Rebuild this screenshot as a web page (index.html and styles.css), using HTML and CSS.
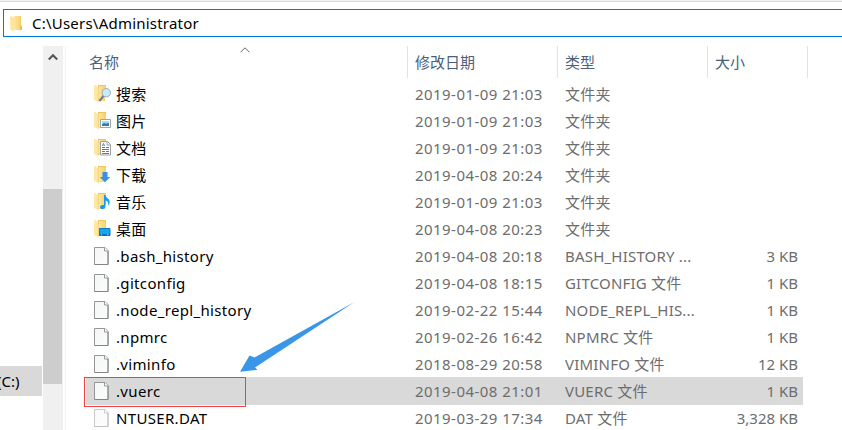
FILE: index.html
```html
<!DOCTYPE html>
<html lang="zh-CN">
<head>
<meta charset="utf-8">
<title>C:\Users\Administrator</title>
<link rel="stylesheet" href="styles.css">
</head>
<body>
<svg class="defs" width="0" height="0">
  <defs>
    <linearGradient id="gold" x1="0" x2="1"><stop offset="0" stop-color="#ffe69e"/><stop offset="1" stop-color="#f4ce68"/></linearGradient>
    <linearGradient id="paper" x1="0" y1="0" x2="1" y2="1"><stop offset="0" stop-color="#f3f5f6"/><stop offset="1" stop-color="#fcfdfd"/></linearGradient>
    <symbol id="folder" viewBox="0 0 18 20">
      <path d="M4 1h8v11l-1 1v4H4z" fill="#efc55d"/>
      <path d="M5 2h7v10l-1 1v4H5z" fill="url(#gold)"/>
      <path d="M0 1.5 1.5 1 4.5 3.5V18L0 16z" fill="#ffe8a3"/>
      <path d="M4 3.2V18" stroke="#f6d98a" stroke-width=".8"/>
    </symbol>
    <symbol id="file" viewBox="0 0 18 20">
      <path d="M.5 1.5h10.6l3 3v14H.5z" fill="url(#paper)" stroke="#979797"/>
      <path d="M10.500 1.5v3.500h3.500" fill="#fff" stroke="#979797"/>
      <path d="M14 5v13.500H.5" fill="none" stroke="#858585"/>
    </symbol>
  </defs>
</svg>
<div class="explorer">
  <div class="topline"></div>
  <div class="address">
    <svg class="address-icon" width="13" height="17" viewBox="0 0 13 17"><path d="M4 1h7v9l1 1v4H4z" fill="url(#gold)"/><path d="M10.5 1v9.5l1.5.5v4h-2" fill="#e8bd54"/><path d="M0 1.5 1.2 1 4 3v13.5L.5 15z" fill="#ffe49a"/></svg>
    <span>C:\Users\Administrator</span>
  </div>
  <div class="content">
    <aside class="tree"><div class="drive"><span>(C:)</span></div></aside>
    <div class="scrollbar">
      <svg class="scroll-up" width="10" height="8" viewBox="0 0 10 8"><path d="M.8 6.5 5 2.3l4.2 4.2" fill="none" stroke="#555" stroke-width="2.1"/></svg>
      <div class="thumb"></div>
    </div>
    <main class="list">
      <div class="head">
        <div class="h-name">名称<svg class="sort" width="10" height="6" viewBox="0 0 10 6"><path d="M.5 5.3 5 .8l4.5 4.5" fill="none" stroke="#666"/></svg></div>
        <div>修改日期</div><div>类型</div><div>大小</div>
      </div>
      <div class="row"><svg class="icon"><use href="#folder"/><path d="m5.3 17 5-6" stroke="#6d7f8c" stroke-width="2"/><circle cx="12.3" cy="8.7" r="4.2" fill="#c9eafb" stroke="#9aabb6"/></svg><span class="name">搜索</span><span class="date">2019-01-09 21:03</span><span class="type">文件夹</span><span class="size"></span></div>
      <div class="row"><svg class="icon"><use href="#folder"/><path d="M6.5 8.5h10v8h-10z" fill="#fff" stroke="#a0a5a8"/><path d="M8 10h7v2.5H8z" fill="#a7d9f7"/><path d="m8 13 2-1 2 .5 3-.5v3H8z" fill="#3a7b9e"/></svg><span class="name">图片</span><span class="date">2019-01-09 21:03</span><span class="type">文件夹</span><span class="size"></span></div>
      <div class="row"><svg class="icon"><use href="#folder"/><path d="M6.5 3.5h7l3 3v10.5h-10z" fill="#fff" stroke="#9a9ea1"/><path d="M13 3.5V7h3.5" fill="none" stroke="#9a9ea1"/><path d="m8.5 8 1-2.5 1 2.500M8 9.500h3M12 9.500h3M8 11.500h7M8 13.500h3M12 13.500h3M8 15.500h7" fill="none" stroke="#2989d2"/></svg><span class="name">文档</span><span class="date">2019-01-09 21:03</span><span class="type">文件夹</span><span class="size"></span></div>
      <div class="row"><svg class="icon"><use href="#folder"/><path d="M8.500 7h5v5h2.700L11 17.200 5.800 12h2.700z" fill="#3493e8"/></svg><span class="name">下载</span><span class="date">2019-04-08 20:24</span><span class="type">文件夹</span><span class="size"></span></div>
      <div class="row"><svg class="icon"><use href="#folder"/><path d="M10 3h1.500c.2 3 4.700 3.500 4.200 7.500-.2 1.500-1 2.500-1.700 3 1-3-.5-4.500-2.500-5v6c0 3-5.500 3.500-5.500.7 0-2 2.500-2.700 4-2z" fill="#139cf2"/></svg><span class="name">音乐</span><span class="date">2019-01-09 21:03</span><span class="type">文件夹</span><span class="size"></span></div>
      <div class="row"><svg class="icon"><use href="#folder"/><path d="M5.500 9.500h10.500v7H5.500z" fill="#16a5ef" stroke="#0878c8"/><path d="M5.500 15.800h10.500" stroke="#075f9c"/><path d="M7 15.800h1M13 15.800h1.500" stroke="#9bdfff"/></svg><span class="name">桌面</span><span class="date">2019-04-08 20:23</span><span class="type">文件夹</span><span class="size"></span></div>
      <div class="row"><svg class="icon"><use href="#file"/></svg><span class="name">.bash_history</span><span class="date">2019-04-08 20:18</span><span class="type">BASH_HISTORY ...</span><span class="size">3 KB</span></div>
      <div class="row"><svg class="icon"><use href="#file"/></svg><span class="name">.gitconfig</span><span class="date">2019-04-08 18:15</span><span class="type">GITCONFIG 文件</span><span class="size">1 KB</span></div>
      <div class="row"><svg class="icon"><use href="#file"/></svg><span class="name">.node_repl_history</span><span class="date">2019-02-22 15:44</span><span class="type">NODE_REPL_HIS...</span><span class="size">1 KB</span></div>
      <div class="row"><svg class="icon"><use href="#file"/></svg><span class="name">.npmrc</span><span class="date">2019-02-26 16:42</span><span class="type">NPMRC 文件</span><span class="size">1 KB</span></div>
      <div class="row"><svg class="icon"><use href="#file"/></svg><span class="name">.viminfo</span><span class="date">2018-08-29 20:58</span><span class="type">VIMINFO 文件</span><span class="size">12 KB</span></div>
      <div class="row selected"><svg class="icon"><use href="#file"/></svg><span class="name">.vuerc</span><span class="date">2019-04-08 21:01</span><span class="type">VUERC 文件</span><span class="size">1 KB</span><div class="marker"></div></div>
      <div class="row"><svg class="icon faded"><use href="#file"/></svg><span class="name">NTUSER.DAT</span><span class="date">2019-03-29 17:34</span><span class="type">DAT 文件</span><span class="size">3,328 KB</span></div>
    </main>
  </div>
  <svg class="arrow" width="118" height="74" viewBox="0 0 118 74"><path d="M115.500 1 15.500 56.500 10.500 54.500 1 70.800 18.500 68.800 16 66.500z" fill="#3a96e8"/></svg>
</div>
</body>
</html>
```
FILE: styles.css
```css
* { box-sizing: border-box; }
body { margin: 0; background: #fff; }
.defs { position: absolute; }
.explorer {
  position: relative;
  width: 842px;
  height: 430px;
  overflow: hidden;
  display: flex;
  flex-direction: column;
  font: 15px/27px "Noto Sans", "Noto Sans CJK SC", sans-serif;
  color: #000;
  white-space: nowrap;
}
.topline { height: 2px; flex: none; background: #f2f2f2; border-bottom: 1px solid #d9d9d9; }
.address {
  flex: none;
  height: 28px;
  margin: 7px 0 9px 3px;
  border: 1px solid #0078d7;
  border-right: 0;
  display: flex;
  align-items: center;
  padding-left: 6px;
  gap: 9px;
  letter-spacing: .22px;
}
.content { display: flex; height: 384px; }
.tree { width: 43px; padding-top: 320px; overflow: hidden; }
.drive { width: 42px; height: 30px; line-height: 30px; background: #d9d9d9; }
.drive span { margin-left: -3px; }
.scrollbar { width: 20px; background: #f0f0f0; display: flex; flex-direction: column; align-items: flex-start; }
.scroll-up { margin: 7px 0 0 5px; flex: none; }
.thumb { width: 19px; height: 195px; margin-top: 128px; background: #cdcdcd; flex: none; }
.list { flex: 1; margin-left: 2px; border-left: 1px solid #f2f2f2; overflow: hidden; }
.head { display: grid; grid-template-columns: 342px 150px 150px 100px; height: 32px; margin-bottom: 3px; line-height: 32px; color: #4c607a; }
.head > div { border-right: 1px solid #e2e2e2; padding-left: 7px; }
.head .h-name { padding-left: 23px; position: relative; }
.sort { position: absolute; left: 174px; top: 1px; }
.row {
  position: relative;
  display: grid;
  grid-template-columns: 22px 299px 150px 142px 91px;
  width: 717px;
  height: 27px;
  line-height: 26px;
  margin-left: 20px;
  padding-left: 8px;
  color: #6d6d6d;
}
.row.selected { background: #d9d9d9; box-shadow: 0 -1px #d9d9d9; }
.icon { width: 18px; height: 20px; margin-top: 3px; }
.icon.faded { opacity: .5; }
.name { color: #000; letter-spacing: .33px; }
.date { letter-spacing: .45px; }
.type { letter-spacing: .2px; }
.size { text-align: right; }
.marker { position: absolute; left: -2px; top: -1px; width: 162px; height: 30px; border: 1px solid #f04040; }
.arrow { position: absolute; left: 239px; top: 301px; }
```
